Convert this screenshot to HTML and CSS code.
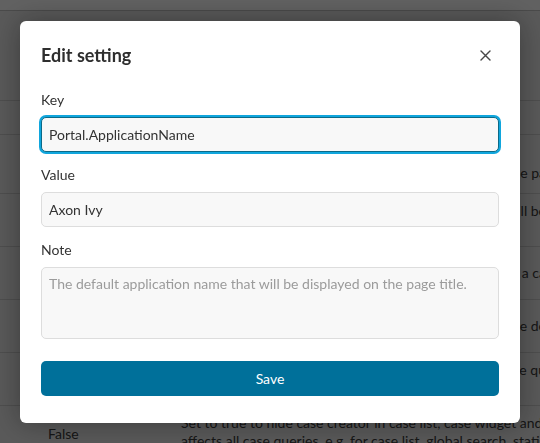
FILE: index.html
```html
<!DOCTYPE html>
<html lang="en">
<head>
<meta charset="utf-8">
<title>Edit setting</title>
<link rel="stylesheet" href="styles.css">
</head>
<body>
<div class="page">
  <div class="topbar"></div>
  <div class="toolbar"></div>
  <div class="row thead"><div class="c-value"></div><div class="c-desc"></div></div>
  <div class="row r1"><div class="c-value"></div><div class="c-desc"><div class="line">The default application</div><div class="line edge">will be displayed on the pa</div></div></div>
  <div class="row r2"><div class="c-value"></div><div class="c-desc"><div class="line edge">Number of tasks that will be</div><div class="line">per page.</div></div></div>
  <div class="row r3"><div class="c-value"></div><div class="c-desc"><div class="line edge">Show the link to create a ca</div></div></div>
  <div class="row r4"><div class="c-value"></div><div class="c-desc"><div class="line edge">Number of items shown by the de</div></div></div>
  <div class="row r5"><div class="c-value"></div><div class="c-desc"><div class="line edge">Set to true to limit the qu</div><div class="line">results.</div></div></div>
  <div class="row r6"><div class="c-value false">False</div><div class="c-desc"><div class="line">Set to true to hide case creator in case list, case widget and</div><div class="line">affects all case queries, e.g. for case list, global search, statistic</div></div></div>
</div>

<div class="backdrop">
  <div class="dialog" role="dialog" aria-labelledby="dlg-title">
    <div class="dialog-header">
      <h2 class="dialog-title" id="dlg-title">Edit setting</h2>
      <button class="close-btn" aria-label="Close">
        <svg width="11" height="11" viewBox="0 0 11 11"><path d="M1 1 L10 10 M10 1 L1 10" stroke="#474747" stroke-width="1.4" fill="none" stroke-linecap="round"/></svg>
      </button>
    </div>
    <form class="form">
      <div class="field">
        <label class="label" for="key">Key</label>
        <input class="input focus" id="key" type="text" value="Portal.ApplicationName">
      </div>
      <div class="field">
        <label class="label" for="val">Value</label>
        <input class="input" id="val" type="text" value="Axon Ivy">
      </div>
      <div class="field">
        <label class="label" for="note">Note</label>
        <textarea class="input textarea" id="note" placeholder="The default application name that will be displayed on the page title."></textarea>
      </div>
      <button type="button" class="save">Save</button>
    </form>
  </div>
</div>
</body>
</html>
```
FILE: styles.css
```css
html, body {
  margin: 0;
  padding: 0;
}
body {
  width: 540px;
  height: 443px;
  overflow: hidden;
  position: relative;
  background: #e8e8e8;
  font-family: Lato, "Noto Sans", sans-serif;
  font-size: 14px;
  color: #333;
}

/* underlying page */
.topbar {
  height: 10px;
  background: #ffffff;
  border-bottom: 1px solid #c2c2c2;
}
.toolbar {
  height: 89px;
  background: #e9e9e9;
}
.row {
  display: flex;
  box-sizing: border-box;
  border-top: 1px solid #cbcbcb;
  background: #e9e9e9;
  align-items: center;
  color: #3a3a3a;
  line-height: 18px;
}
.thead { height: 34px; }
.r1 { height: 59px; }
.r2, .r3, .r4, .r5 { height: 53px; }
.r5 { align-items: flex-start; padding-top: 8px; }
.r6 { height: 60px; align-items: flex-start; padding-top: 8px; }
.c-value {
  width: 181px;
  padding-left: 48px;
  box-sizing: border-box;
  flex: none;
}
.c-value.false { padding-top: 11px; }
.c-desc {
  width: 365px;
  flex: none;
}
.line { white-space: nowrap; }
.line.edge { text-align: right; }

/* modal */
.backdrop {
  position: fixed;
  inset: 0;
  background: rgba(0, 0, 0, 0.62);
  display: flex;
  align-items: flex-start;
}
.dialog {
  margin: 21px 0 0 20px;
  width: 500px;
  box-sizing: border-box;
  padding: 21px 21px 27px;
  background: #ffffff;
  border-radius: 6px;
  box-shadow: 0 0 28px rgba(0, 0, 0, 0.35);
}
.dialog-header {
  display: flex;
  align-items: center;
  justify-content: space-between;
  height: 26px;
}
.dialog-title {
  margin: 0;
  font-size: 18px;
  line-height: 26px;
  font-weight: 700;
  color: #2e2e2e;
}
.close-btn {
  width: 21px;
  height: 21px;
  margin-right: 3px;
  padding: 0;
  border: 0;
  background: transparent;
  display: flex;
  align-items: center;
  justify-content: center;
}
.form {
  margin: 22px 0 0;
  display: flex;
  flex-direction: column;
}
.field {
  display: flex;
  flex-direction: column;
}
.field + .field { margin-top: 13px; }
.label {
  line-height: 20px;
  margin-bottom: 7px;
  color: #333;
}
.input {
  height: 35px;
  box-sizing: border-box;
  margin: 0;
  padding: 0 7px;
  border: 1px solid #dddddd;
  border-radius: 5px;
  background: #f8f8f8;
  font-family: inherit;
  font-size: 14px;
  color: #333;
  outline: none;
}
.input.focus {
  border-color: #0b6a88;
  box-shadow: 0 0 0 2px #10a6dd;
}
.textarea {
  height: 72px;
  padding-top: 6px;
  line-height: 20px;
  resize: none;
}
.textarea::placeholder { color: #9b9b9b; opacity: 1; }
.save {
  margin-top: 22px;
  height: 35px;
  border: 0;
  border-radius: 5px;
  background: #00709a;
  color: #ffffff;
  font-family: inherit;
  font-size: 14px;
}
```
